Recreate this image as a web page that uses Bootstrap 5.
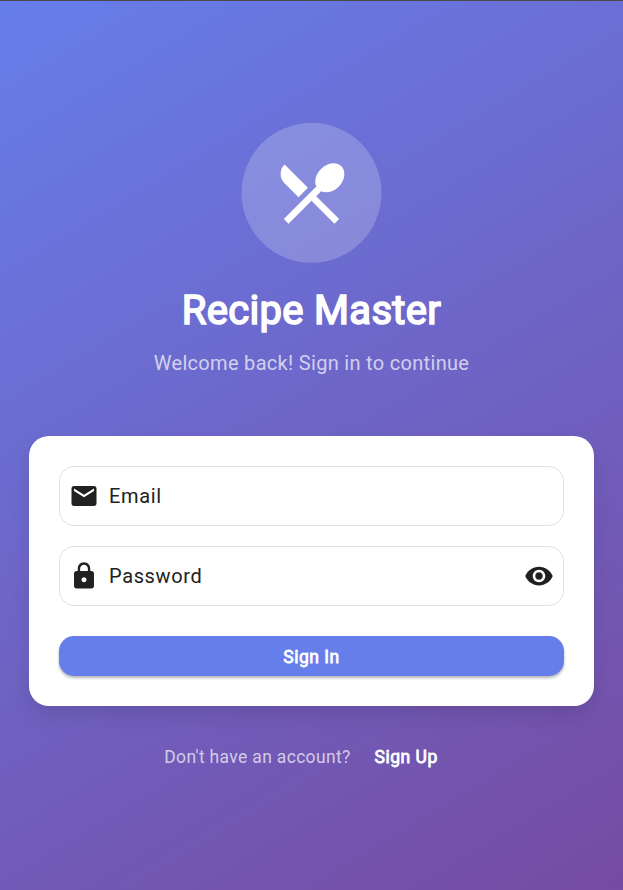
<!DOCTYPE html>
<html lang="en">
<head>
<meta charset="utf-8">
<meta name="viewport" content="width=device-width, initial-scale=1">
<title>Recipe Master</title>
<link href="https://cdn.jsdelivr.net/npm/bootstrap@5.3.0/dist/css/bootstrap.min.css" rel="stylesheet">
<style>
body{font-family:Roboto,sans-serif;background:linear-gradient(149deg,#667eea 0%,#764ba2 100%);border-top:1px solid #4a4a4a;height:890px;overflow:hidden}
main{padding:122px 29px 0}
.logo-disc{width:141px;height:140px}
.app-title{font-size:40px;line-height:48px;font-weight:400;-webkit-text-stroke:1.6px #fff;margin-top:24px;letter-spacing:.31px}
.app-sub{font-size:20px;line-height:24px;margin-top:16px;color:rgba(255,255,255,.7);letter-spacing:.31px}
.login-card{margin-top:61px;padding:30px;border-radius:20px;box-shadow:0 10px 20px rgba(0,0,0,.1)}
.field{height:60px;border:1px solid #e0e0e0;border-radius:15px;padding:0 9px 0 9px;margin-bottom:20px}
.field input{font-size:20px;letter-spacing:.62px;color:#212121;padding:0;margin-left:10px}
.field input::placeholder{color:#212121;opacity:1}
.btn-sign{height:40px;margin-top:30px;border-radius:15px;background:#667eea;color:#fff;font-size:17.5px;font-weight:400;-webkit-text-stroke:.8px #fff;letter-spacing:.5px;line-height:24px;padding:2px 0 0;box-shadow:0 2px 3px rgba(0,0,0,.3)}
.btn-sign:hover{background:#5c74e0;color:#fff}
.foot{margin-top:39px;font-size:17.5px;line-height:24px;color:rgba(255,255,255,.7);gap:24px;padding-right:21px;letter-spacing:.33px}
.foot a{-webkit-text-stroke:.8px #fff;letter-spacing:.5px}
</style>
<script src="https://cdn.jsdelivr.net/npm/bootstrap@5.3.0/dist/js/bootstrap.bundle.min.js"></script>
</head>
<body>
<main class="d-flex flex-column align-items-center">
  <svg class="logo-disc flex-shrink-0" viewBox="0 0 141 140" fill="#fff">
    <circle cx="70.5" cy="69.8" r="70" fill-opacity=".2"/>
    <path transform="translate(30.5 29.8) scale(3.33333)" d="M8.1 13.34l2.83-2.83L3.91 3.5a4.008 4.008 0 0 0 0 5.66l4.19 4.18zm6.78-1.81c1.53.71 3.68.21 5.27-1.38 1.91-1.91 2.28-4.65.81-6.12-1.46-1.46-4.2-1.1-6.12.81-1.59 1.59-2.09 3.74-1.38 5.27L3.7 19.87l1.41 1.41L12 14.41l6.88 6.88 1.41-1.41L13.41 13l1.47-1.47z"/>
  </svg>
  <h1 class="app-title text-white mb-0">Recipe Master</h1>
  <p class="app-sub mb-0">Welcome back! Sign in to continue</p>
  <form class="login-card bg-white w-100">
    <div class="field d-flex align-items-center">
      <svg class="flex-shrink-0" width="30" height="30" viewBox="0 0 24 24" fill="#212121"><path d="M20 4H4c-1.1 0-1.99.9-1.99 2L2 18c0 1.1.9 2 2 2h16c1.1 0 2-.9 2-2V6c0-1.1-.9-2-2-2zm0 4l-8 5-8-5V6l8 5 8-5v2z"/></svg>
      <input type="email" class="form-control border-0 shadow-none bg-transparent" placeholder="Email" aria-label="Email">
    </div>
    <div class="field d-flex align-items-center mb-0">
      <svg class="flex-shrink-0" width="30" height="30" viewBox="0 0 24 24" fill="#212121"><path d="M18 8h-1V6c0-2.76-2.24-5-5-5S7 3.24 7 6v2H6c-1.1 0-2 .9-2 2v10c0 1.1.9 2 2 2h12c1.1 0 2-.9 2-2V10c0-1.1-.9-2-2-2zm-6 9c-1.1 0-2-.9-2-2s.9-2 2-2 2 .9 2 2-.9 2-2 2zm3.1-9H8.9V6c0-1.71 1.39-3.1 3.1-3.1 1.71 0 3.1 1.39 3.1 3.1v2z"/></svg>
      <input type="password" class="form-control border-0 shadow-none bg-transparent" placeholder="Password" aria-label="Password">
      <svg class="flex-shrink-0" width="30" height="30" viewBox="0 0 24 24" fill="#212121"><path d="M12 4.5C7 4.5 2.73 7.61 1 12c1.73 4.39 6 7.5 11 7.5s9.27-3.11 11-7.5c-1.73-4.39-6-7.5-11-7.5zM12 17c-2.76 0-5-2.24-5-5s2.24-5 5-5 5 2.24 5 5-2.24 5-5 5zm0-8c-1.66 0-3 1.34-3 3s1.34 3 3 3 3-1.34 3-3-1.34-3-3-3z"/></svg>
    </div>
    <button type="button" class="btn btn-sign w-100 border-0">Sign In</button>
  </form>
  <div class="foot d-flex justify-content-center"><span>Don't have an account?</span><a href="#" class="text-white text-decoration-none">Sign Up</a></div>
</main>
</body>
</html>
